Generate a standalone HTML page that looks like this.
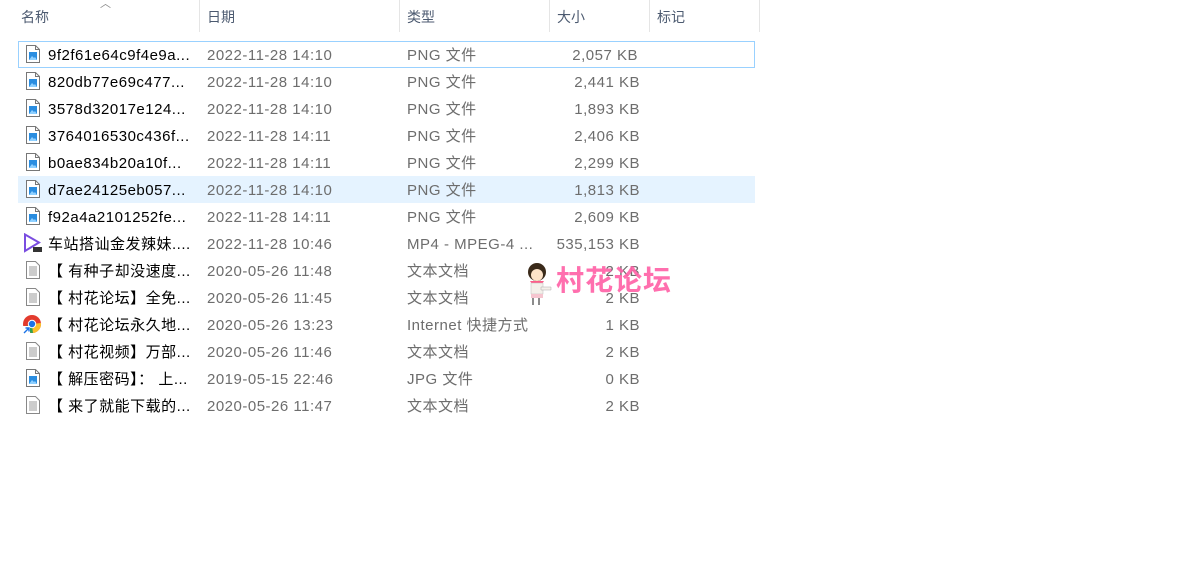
<!DOCTYPE html>
<html><head><meta charset="utf-8"><style>
body{margin:0;width:1197px;height:571px;background:#fff;font-family:"Liberation Sans","Noto Sans CJK SC",sans-serif;font-size:15px;letter-spacing:0.5px;position:relative;overflow:hidden}
.h{position:absolute;top:1px;line-height:33px;color:#4c5a70;font-size:14px;letter-spacing:0}
.sep{position:absolute;top:0;width:1px;height:32px;background:#e5e5e5}
.r{position:absolute;left:18px;width:737px;height:27px;box-sizing:border-box}
.r span{position:absolute;top:2px;line-height:26px;white-space:nowrap}
.n{left:30px;color:#000}
.d{left:189px;color:#6d6d6d}
.t{left:389px;color:#6d6d6d}
.s{right:115px;color:#6d6d6d}
.ic{position:absolute;left:7px;top:3px}
</style></head><body>
<div style="position:absolute;left:100px;top:0;color:#888;font-size:11px;line-height:8px">︿</div>
<div class="h" style="left:21px">名称</div>
<div class="h" style="left:207px">日期</div>
<div class="h" style="left:407px">类型</div>
<div class="h" style="left:557px">大小</div>
<div class="h" style="left:657px">标记</div>
<div class="sep" style="left:199px"></div><div class="sep" style="left:399px"></div><div class="sep" style="left:549px"></div><div class="sep" style="left:649px"></div><div class="sep" style="left:759px"></div>

<div id="rows"></div>
<script>
var png='<svg class="ic" width="16" height="20" viewBox="0 0 16 20"><path d="M1.5 1.5h9l4 4v13h-13z" fill="#fff" stroke="#777"/><path d="M10.5 1.5v4h4" fill="none" stroke="#777"/><rect x="4" y="8" width="8" height="8" fill="#2a8de0"/><path d="M4 16l3-4 2 2 1-1 2 3z" fill="#8fd0ff"/></svg>';
var txt='<svg class="ic" width="16" height="20" viewBox="0 0 16 20"><path d="M1.5 1.5h9l4 4v13h-13z" fill="#fff" stroke="#888"/><path d="M4 7h8M4 9h8M4 11h8M4 13h8M4 15h8" stroke="#999"/></svg>';
var mp4='<svg class="ic" style="left:5px" width="20" height="20" viewBox="0 0 20 20"><path d="M2 1.5l14 8-14 8.5z" fill="none" stroke="#7a4de0" stroke-width="2"/><rect x="10" y="14" width="9" height="5" fill="#333"/></svg>';
var chr='<svg class="ic" style="left:4px;top:3px" width="20" height="20" viewBox="0 0 20 20"><circle cx="10" cy="10" r="9" fill="#e33b2e"/><path d="M10 10L1.5 13A9 9 0 0 0 11 19z" fill="#2ea44f"/><path d="M10 10L19 9A9 9 0 0 1 11 19z" fill="#fbc02d"/><circle cx="10" cy="10" r="4.2" fill="#fff"/><circle cx="10" cy="10" r="3.2" fill="#1a73e8"/><rect x="0" y="12" width="8" height="8" fill="#fff"/><path d="M2 19l5-5M3.5 14H7v3.5" stroke="#1a73e8" stroke-width="1.4" fill="none"/></svg>';
var R=[[png,'9f2f61e64c9f4e9a...','2022-11-28 14:10','PNG 文件','2,057 KB'],
[png,'820db77e69c477...','2022-11-28 14:10','PNG 文件','2,441 KB'],
[png,'3578d32017e124...','2022-11-28 14:10','PNG 文件','1,893 KB'],
[png,'3764016530c436f...','2022-11-28 14:11','PNG 文件','2,406 KB'],
[png,'b0ae834b20a10f...','2022-11-28 14:11','PNG 文件','2,299 KB'],
[png,'d7ae24125eb057...','2022-11-28 14:10','PNG 文件','1,813 KB'],
[png,'f92a4a2101252fe...','2022-11-28 14:11','PNG 文件','2,609 KB'],
[mp4,'车站搭讪金发辣妹....','2022-11-28 10:46','MP4 - MPEG-4 ...','535,153 KB'],
[txt,'【 有种子却没速度...','2020-05-26 11:48','文本文档','2 KB'],
[txt,'【 村花论坛】全免...','2020-05-26 11:45','文本文档','2 KB'],
[chr,'【 村花论坛永久地...','2020-05-26 13:23','Internet 快捷方式','1 KB'],
[txt,'【 村花视频】万部...','2020-05-26 11:46','文本文档','2 KB'],
[png,'【 解压密码】： 上...','2019-05-15 22:46','JPG 文件','0 KB'],
[txt,'【 来了就能下载的...','2020-05-26 11:47','文本文档','2 KB']];
var h='';
R.forEach(function(r,i){
 var st='top:'+(41+27*i)+'px;';
 if(i==0)st+='border:1px solid #99d1ff;';
 if(i==5)st+='background:#e5f3ff;';
 var o=(i==0)?'margin-top:-1px;margin-left:-1px;':'';
 h+='<div class="r" style="'+st+'"><div style="position:absolute;left:0;top:0;width:100%;height:27px;'+o+'">'+r[0]+'<span class="n">'+r[1]+'</span><span class="d">'+r[2]+'</span><span class="t">'+r[3]+'</span><span class="s">'+r[4]+'</span></div></div>';
});
document.getElementById('rows').innerHTML=h;
</script>
<svg style="position:absolute;left:523px;top:262px" width="34" height="46" viewBox="0 0 34 46">
<ellipse cx="14" cy="10" rx="9" ry="9" fill="#3a2a1a"/><ellipse cx="14" cy="13" rx="6" ry="6" fill="#fde3c8"/>
<path d="M7 19h14l-2 3H9z" fill="#ff5c8a"/><rect x="8" y="21" width="12" height="11" fill="#f4f0ea" stroke="#bbb" stroke-width=".5"/>
<path d="M18 25h10v3H18z" fill="#f4f0ea" stroke="#aaa" stroke-width=".5"/><rect x="8" y="32" width="12" height="4" fill="#f5c5cf"/>
<path d="M10 36v7M16 36v7" stroke="#666" stroke-width="1.5"/></svg>
<div style="position:absolute;left:556px;top:262px;color:#ff63a8;font-size:28px;font-weight:bold;letter-spacing:1px;font-family:'Noto Sans CJK SC',sans-serif;opacity:.92;line-height:34px">村花论坛</div>
</body></html>
